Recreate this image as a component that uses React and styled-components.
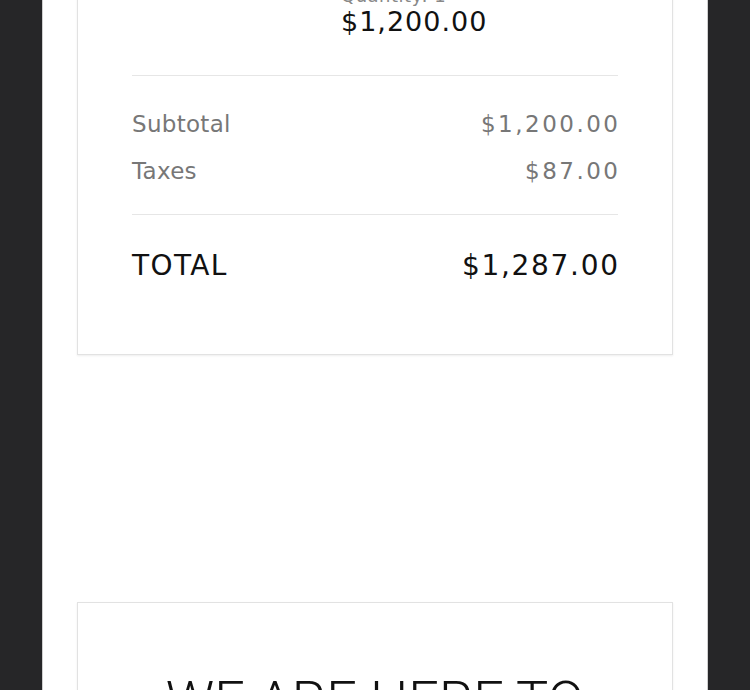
import React from "react";
import styled, { createGlobalStyle } from "styled-components";

const Global = createGlobalStyle`
  html, body { margin: 0; padding: 0; background: #262628; overflow: hidden; }
  * { box-sizing: border-box; }
`;

const Page = styled.div`
  width: 666px;
  margin: -40px auto 0;
  min-height: 900px;
  background: #fff;
  border-left: 1px solid #cfcfcf;
  border-right: 1px solid #cfcfcf;
  padding: 0 34px 60px;
  font-family: "DejaVu Sans", Verdana, sans-serif;
`;

const Card = styled.section`
  background: #fff;
  border: 1px solid #e2e2e2;
  box-shadow: 0 1px 2px rgba(0, 0, 0, 0.07);
  padding: ${(p) => p.$pad};
  margin-top: ${(p) => p.$top || "0"};
`;

const Details = styled.div`
  padding-left: 209px;
  margin-bottom: 39px;
`;

const Quantity = styled.div`
  font-size: 18px;
  line-height: 24px;
  color: #888;
  letter-spacing: 0.5px;
`;

const Price = styled.div`
  font-size: 27px;
  line-height: 28px;
  color: #111;
  letter-spacing: 1px;
`;

const Divider = styled.hr`
  border: 0;
  height: 1px;
  margin: 0;
  background: #e6e6e6;
`;

const Summary = styled.div`
  display: flex;
  flex-direction: column;
  gap: 17px;
  padding: 33px 0 28px;
`;

const Row = styled.div`
  display: flex;
  justify-content: space-between;
  align-items: baseline;
  font-size: ${(p) => (p.$total ? "28px" : "23px")};
  line-height: ${(p) => (p.$total ? "34px" : "30px")};
  color: ${(p) => (p.$total ? "#111" : "#777")};
  padding-top: ${(p) => (p.$total ? "34px" : "0")};
`;

const Label = styled.span`
  letter-spacing: ${(p) => (p.$total ? "1.4px" : "0.3px")};
`;

const Amount = styled.span`
  letter-spacing: ${(p) => (p.$total ? "1.7px" : "2.5px")};
  margin-right: ${(p) => (p.$total ? "-1.7px" : "-2.5px")};
`;

const Heading = styled.h2`
  margin: 0;
  text-align: center;
  font-family: Roboto, "Liberation Sans", Arial, sans-serif;
  font-weight: 300;
  font-size: 54px;
  line-height: 64px;
  color: #111;
`;

export default function App() {
  return (
    <>
      <Global />
      <Page>
        <Card $pad="23px 54px 71px">
          <Details>
            <Quantity>Quantity: 1</Quantity>
            <Price>$1,200.00</Price>
          </Details>
          <Divider />
          <Summary>
            <Row>
              <Label>Subtotal</Label>
              <Amount>$1,200.00</Amount>
            </Row>
            <Row>
              <Label>Taxes</Label>
              <Amount>$87.00</Amount>
            </Row>
          </Summary>
          <Divider />
          <Row $total>
            <Label $total>TOTAL</Label>
            <Amount $total>$1,287.00</Amount>
          </Row>
        </Card>
        <Card $pad="66px 54px 60px" $top="247px">
          <Heading>WE ARE HERE TO HELP</Heading>
        </Card>
      </Page>
    </>
  );
}
